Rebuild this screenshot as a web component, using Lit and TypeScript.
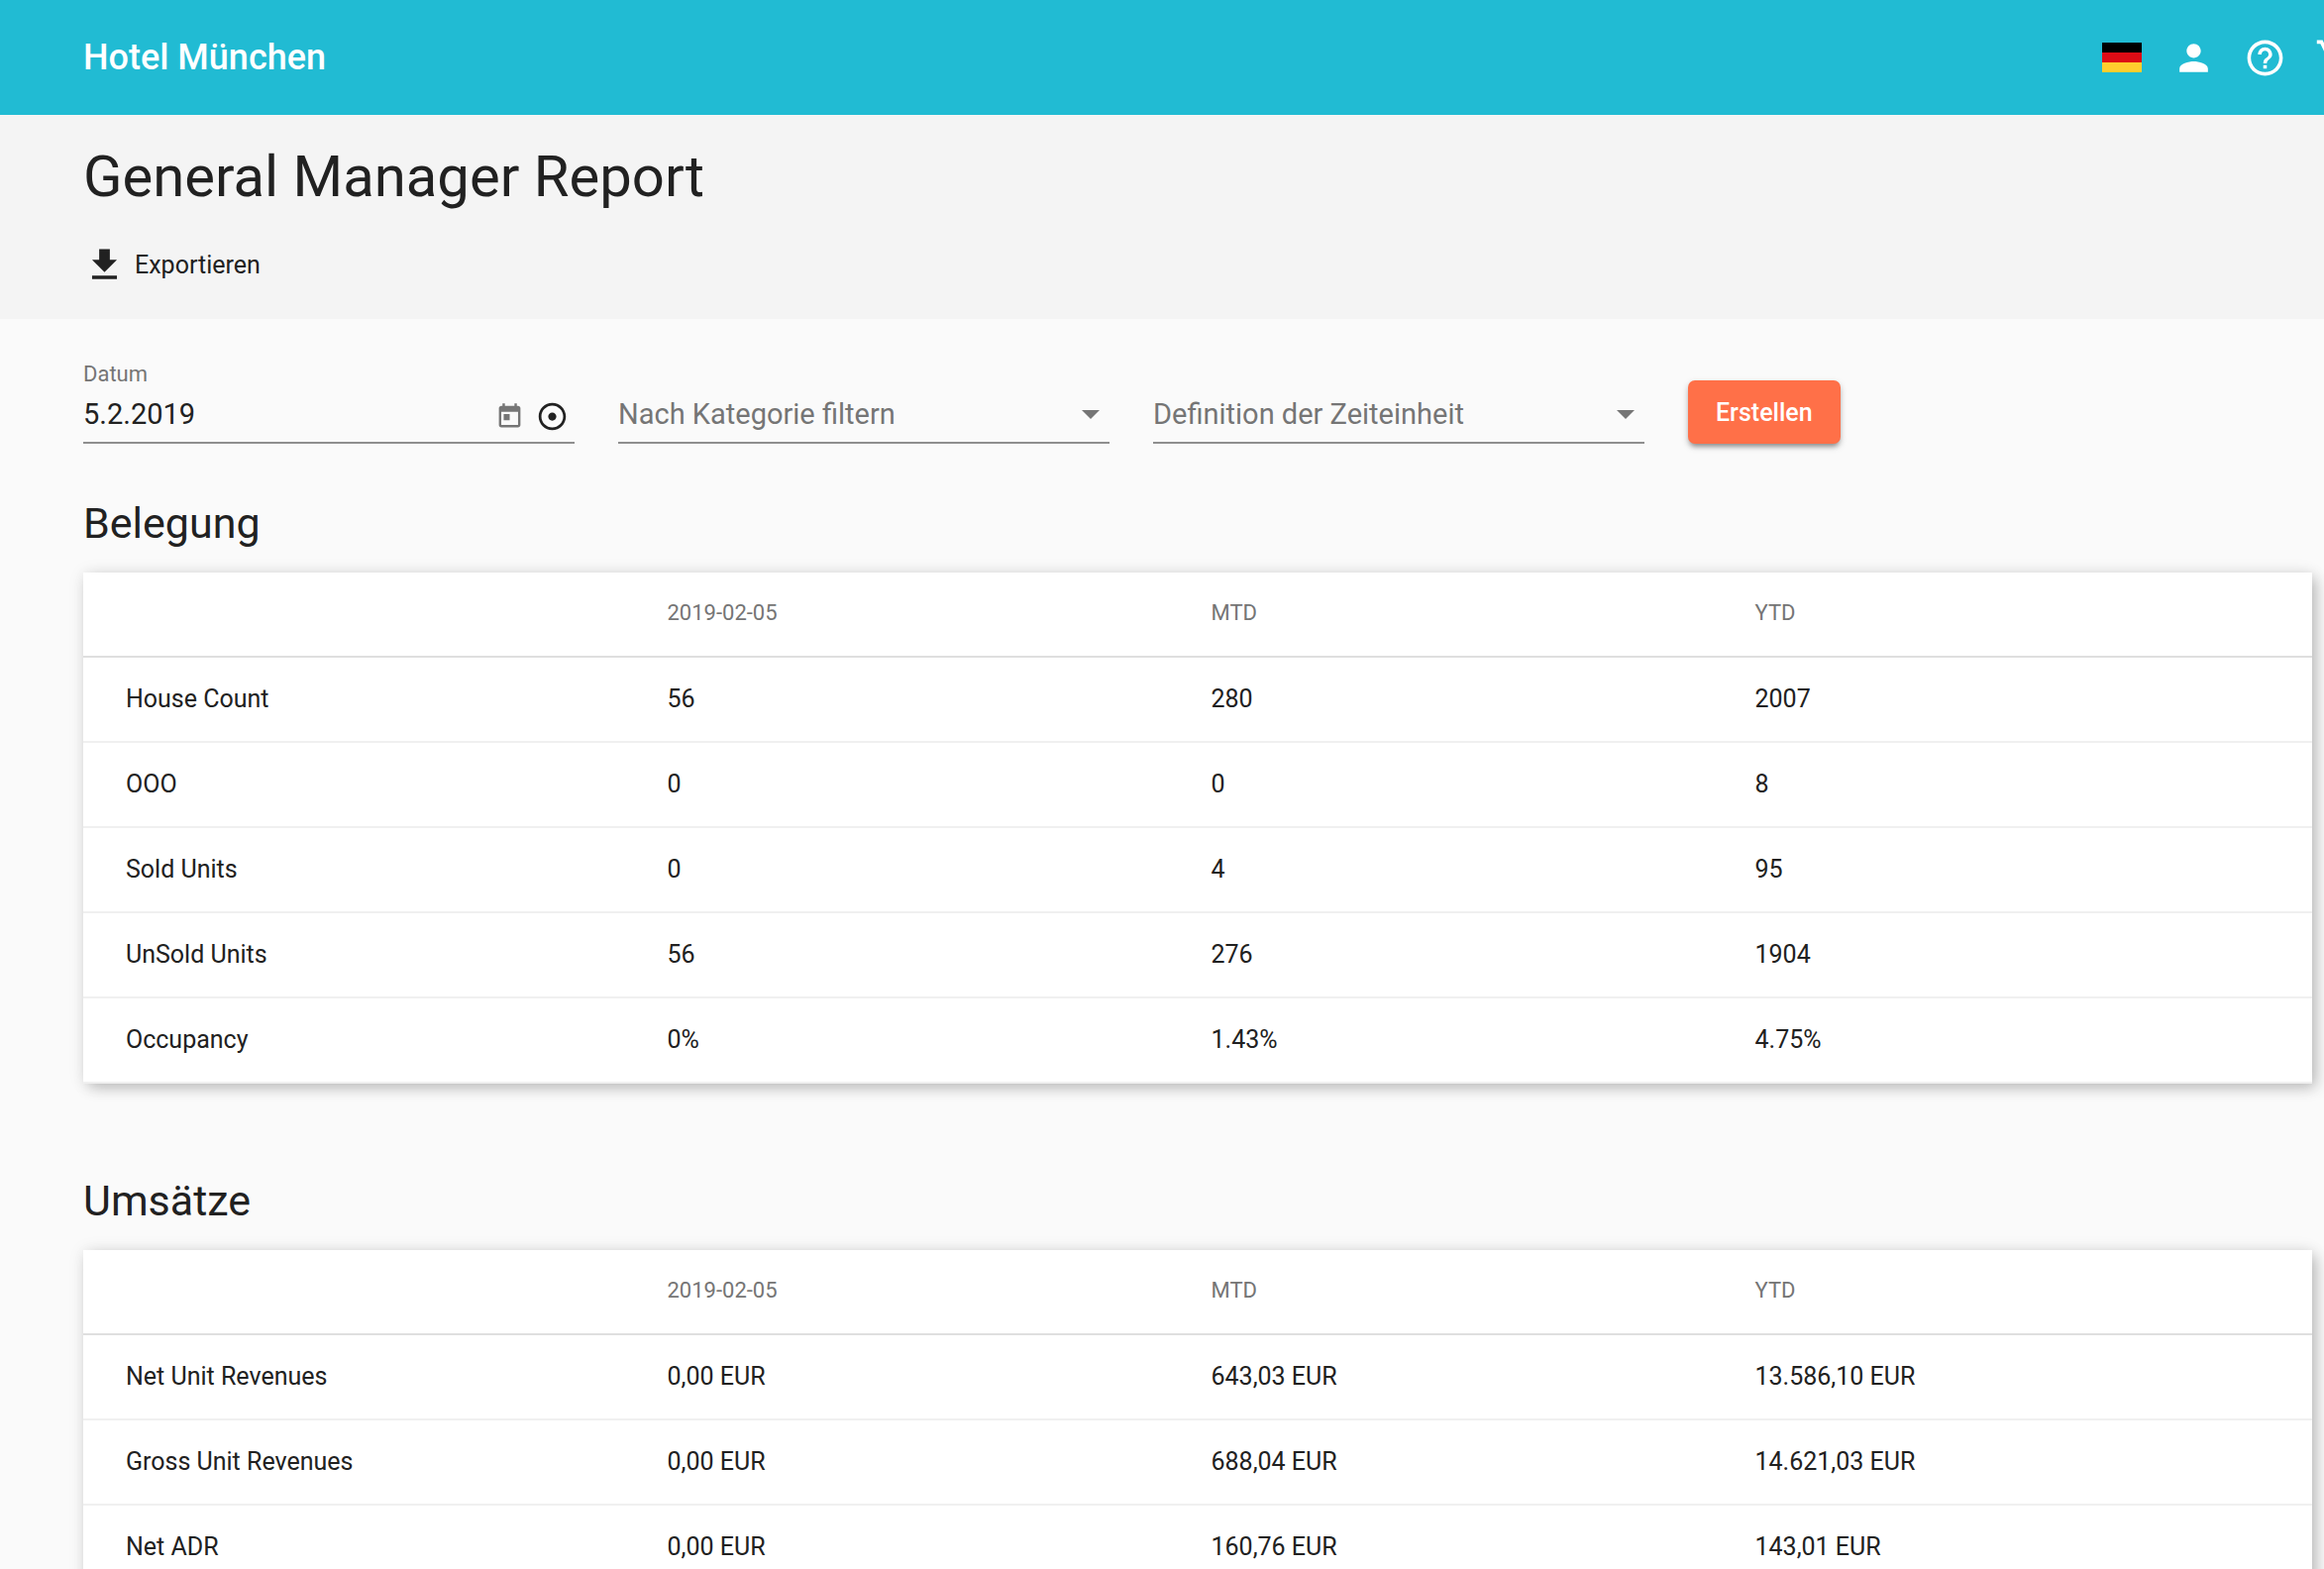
import { LitElement, html, css, svg } from "lit";
import { customElement, property } from "lit/decorators.js";

interface ReportRow {
  label: string;
  values: string[];
}

interface ReportSection {
  title: string;
  rows: ReportRow[];
}

const PERIODS = ["2019-02-05", "MTD", "YTD"];

const SECTIONS: ReportSection[] = [
  {
    title: "Belegung",
    rows: [
      { label: "House Count", values: ["56", "280", "2007"] },
      { label: "OOO", values: ["0", "0", "8"] },
      { label: "Sold Units", values: ["0", "4", "95"] },
      { label: "UnSold Units", values: ["56", "276", "1904"] },
      { label: "Occupancy", values: ["0%", "1.43%", "4.75%"] },
    ],
  },
  {
    title: "Umsätze",
    rows: [
      { label: "Net Unit Revenues", values: ["0,00 EUR", "643,03 EUR", "13.586,10 EUR"] },
      { label: "Gross Unit Revenues", values: ["0,00 EUR", "688,04 EUR", "14.621,03 EUR"] },
      { label: "Net ADR", values: ["0,00 EUR", "160,76 EUR", "143,01 EUR"] },
    ],
  },
];

const ICONS = {
  person: svg`<path d="M12 12c2.21 0 4-1.79 4-4s-1.79-4-4-4-4 1.79-4 4 1.79 4 4 4zm0 2c-2.67 0-8 1.34-8 4v2h16v-2c0-2.66-5.33-4-8-4z"/>`,
  help: svg`<path d="M11 18h2v-2h-2v2zm1-16C6.48 2 2 6.48 2 12s4.48 10 10 10 10-4.48 10-10S17.52 2 12 2zm0 18c-4.41 0-8-3.59-8-8s3.59-8 8-8 8 3.59 8 8-3.59 8-8 8zm0-14c-2.21 0-4 1.79-4 4h2c0-1.1.9-2 2-2s2 .9 2 2c0 2-3 1.75-3 5h2c0-2.25 3-2.5 3-5 0-2.21-1.79-4-4-4z"/>`,
  cart: svg`<path d="M7 18c-1.1 0-1.99.9-1.99 2S5.9 22 7 22s2-.9 2-2-.9-2-2-2zM1 2v2h2l3.6 7.59-1.35 2.45c-.16.28-.25.61-.25.96 0 1.1.9 2 2 2h12v-2H7.42c-.14 0-.25-.11-.25-.25l.03-.12.9-1.63h7.45c.75 0 1.41-.41 1.75-1.03l3.58-6.49c.08-.14.12-.31.12-.48 0-.55-.45-1-1-1H5.21l-.94-2H1zm16 16c-1.1 0-1.99.9-1.99 2s.89 2 1.99 2 2-.9 2-2-.9-2-2-2z"/>`,
  download: svg`<path d="M19 9h-4V3H9v6H5l7 7 7-7zM5 18v2h14v-2H5z"/>`,
  today: svg`<path d="M19 3h-1V1h-2v2H8V1H6v2H5c-1.11 0-1.99.9-1.99 2L3 19c0 1.1.89 2 2 2h14c1.1 0 2-.9 2-2V5c0-1.1-.9-2-2-2zm0 16H5V8h14v11zM7 10h5v5H7v-5z"/>`,
  adjust: svg`<path d="M12 2C6.49 2 2 6.49 2 12s4.49 10 10 10 10-4.49 10-10S17.51 2 12 2zm0 18c-4.41 0-8-3.59-8-8s3.59-8 8-8 8 3.59 8 8-3.59 8-8 8zm3-8c0 1.66-1.34 3-3 3s-3-1.34-3-3 1.34-3 3-3 3 1.34 3 3z"/>`,
};

function icon(name: keyof typeof ICONS, cls = "icon") {
  return html`<svg class=${cls} viewBox="0 0 24 24" fill="currentColor" aria-hidden="true">${ICONS[name]}</svg>`;
}

@customElement("report-section")
export class ReportSectionElement extends LitElement {
  @property({ attribute: false }) section!: ReportSection;

  static styles = css`
    :host {
      display: block;
    }
    .title {
      margin: 0 0 24px;
      font-size: 43px;
      line-height: 52px;
      font-weight: 400;
    }
    .table {
      width: 100%;
      table-layout: fixed;
      border-collapse: separate;
      border-spacing: 0;
      background: #fff;
      box-shadow: 0 0 16px rgba(0, 0, 0, 0.08), 5px 5px 14px -1px rgba(0, 0, 0, 0.23);
    }
    .col-label {
      width: 26.2%;
    }
    .col-value {
      width: 24.4%;
    }
    .cell {
      box-sizing: border-box;
      height: 86px;
      padding: 0;
      border-bottom: 2px solid #f0f0f0;
      font-size: 25px;
      line-height: 30px;
      font-weight: 400;
      text-align: left;
      vertical-align: middle;
    }
    .head {
      padding-bottom: 2px;
      border-bottom-color: #dfdfdf;
      color: #757575;
      font-size: 22px;
    }
    .label {
      padding-left: 43px;
    }
  `;

  render() {
    return html`
      <h2 class="title" id="title">${this.section.title}</h2>
      <table class="table" aria-labelledby="title">
        <colgroup>
          <col class="col-label" />
          <col class="col-value" />
          <col class="col-value" />
          <col />
        </colgroup>
        <thead>
          <tr>
            <td class="cell head label"></td>
            ${PERIODS.map((p) => html`<th class="cell head" scope="col">${p}</th>`)}
          </tr>
        </thead>
        <tbody>
          ${this.section.rows.map(
            (row) => html`<tr>
              <th class="cell label" scope="row">${row.label}</th>
              ${row.values.map((v) => html`<td class="cell">${v}</td>`)}
            </tr>`
          )}
        </tbody>
      </table>
    `;
  }
}

@customElement("app-root")
export class AppRoot extends LitElement {
  static styles = css`
    :host {
      display: block;
      min-height: 100vh;
      background: #fafafa;
      color: #212121;
      font-family: Roboto, "Liberation Sans", sans-serif;
      font-size: 25px;
    }
    button,
    input,
    select {
      margin: 0;
      padding: 0;
      border: 0;
      background: none;
      color: inherit;
      font: inherit;
    }
    button {
      cursor: pointer;
    }
    .icon {
      display: block;
      flex: none;
      width: 43px;
      height: 43px;
    }
    .topbar {
      display: flex;
      align-items: center;
      justify-content: space-between;
      height: 116px;
      padding-left: 84px;
      overflow: hidden;
      background: #21bbd3;
      color: #fff;
    }
    .hotel {
      font-size: 36px;
      font-weight: 500;
      line-height: 44px;
      color: inherit;
      text-decoration: none;
    }
    .actions {
      display: flex;
      /* the last action runs past the window edge */
      margin-right: -48px;
    }
    .action {
      display: flex;
      align-items: center;
      justify-content: center;
      width: 72px;
      height: 72px;
    }
    .flag {
      display: block;
      width: 40px;
      height: 30px;
    }
    .pagehead {
      padding: 28px 84px 33px;
      background: #f4f4f4;
    }
    .heading {
      margin: 0 0 34px;
      font-size: 58px;
      line-height: 68px;
      font-weight: 400;
    }
    .export {
      display: flex;
      align-items: center;
      gap: 9px;
      line-height: 30px;
    }
    .main {
      padding: 44px 12px 92px 84px;
    }
    .filters {
      display: grid;
      grid-template-columns: repeat(3, minmax(0, 1fr)) 28%;
      gap: 44px;
      align-items: end;
      margin-bottom: 54px;
    }
    .caption {
      display: block;
      color: #757575;
      font-size: 22px;
      line-height: 24px;
    }
    .control {
      display: flex;
      align-items: center;
      height: 56px;
      border-bottom: 2px solid #8f8f8f;
      font-size: 29px;
    }
    .date {
      flex: 1;
      min-width: 0;
      height: 56px;
    }
    .tools {
      display: flex;
      align-items: center;
      gap: 12px;
      padding: 4px 6px 0 0;
    }
    .today {
      color: #757575;
    }
    .small {
      display: block;
      width: 29px;
      height: 29px;
    }
    .medium {
      display: block;
      width: 33px;
      height: 33px;
    }
    .picker {
      display: grid;
      grid-template-columns: minmax(0, 1fr);
      color: #757575;
    }
    .select,
    .arrow {
      grid-area: 1 / 1;
    }
    .select {
      width: 100%;
      height: 56px;
      appearance: none;
    }
    .arrow {
      justify-self: end;
      width: 18px;
      height: 9px;
      margin-right: 10px;
      pointer-events: none;
    }
    .submit {
      justify-self: start;
      height: 64px;
      padding: 0 28px;
      border-radius: 7px;
      background: #ff7048;
      color: #fff;
      font-weight: 500;
      box-shadow: 0 5px 5px -3px rgba(0, 0, 0, 0.3), 0 3px 6px rgba(0, 0, 0, 0.25);
    }
    .sections {
      display: grid;
      gap: 92px;
    }
  `;

  private renderSelect(label: string) {
    return html`
      <div class="control picker">
        <select class="select" aria-label=${label}>
          <option selected>${label}</option>
        </select>
        <svg class="arrow" viewBox="0 0 18 9" fill="currentColor" aria-hidden="true">
          <path d="M0 0h18L9 9z" />
        </svg>
      </div>
    `;
  }

  render() {
    return html`
      <header class="topbar">
        <a class="hotel" href="#">Hotel München</a>
        <nav class="actions">
          <button class="action" type="button" aria-label="Sprache">
            <svg class="flag" viewBox="0 0 40 30" aria-hidden="true">
              <path fill="#000" d="M0 0h40v10H0z" />
              <path fill="#dd0c15" d="M0 10h40v10H0z" />
              <path fill="#ffce2e" d="M0 20h40v10H0z" />
            </svg>
          </button>
          <button class="action" type="button" aria-label="Profil">${icon("person")}</button>
          <button class="action" type="button" aria-label="Hilfe">${icon("help")}</button>
          <button class="action" type="button" aria-label="Warenkorb">${icon("cart")}</button>
        </nav>
      </header>

      <div class="pagehead">
        <h1 class="heading">General Manager Report</h1>
        <button class="export" type="button">${icon("download")}Exportieren</button>
      </div>

      <main class="main">
        <form class="filters" @submit=${(e: Event) => e.preventDefault()}>
          <div>
            <label class="caption" for="date">Datum</label>
            <div class="control">
              <input class="date" id="date" type="text" .value=${"5.2.2019"} />
              <div class="tools">
                <button class="today" type="button" aria-label="Kalender">${icon("today", "small")}</button>
                <button type="button" aria-label="Heute">${icon("adjust", "medium")}</button>
              </div>
            </div>
          </div>
          ${this.renderSelect("Nach Kategorie filtern")}
          ${this.renderSelect("Definition der Zeiteinheit")}
          <button class="submit" type="submit">Erstellen</button>
        </form>

        <div class="sections">
          ${SECTIONS.map((s) => html`<report-section .section=${s}></report-section>`)}
        </div>
      </main>
    `;
  }
}
